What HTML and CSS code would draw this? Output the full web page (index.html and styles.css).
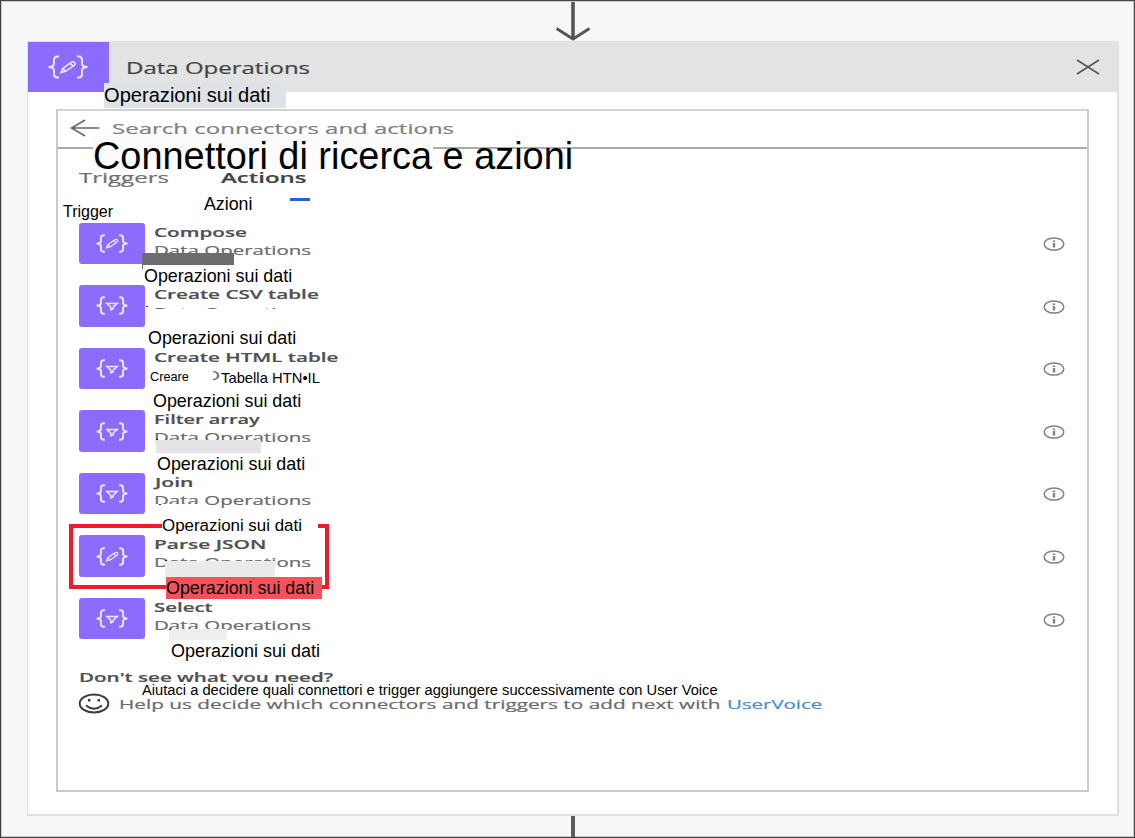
FILE: index.html
```html
<!DOCTYPE html>
<html lang="it">
<head>
<meta charset="utf-8">
<title>Data Operations</title>
<link rel="stylesheet" href="styles.css">
</head>
<body>
<svg class="defs" width="0" height="0" aria-hidden="true">
  <symbol id="braces" viewBox="0 0 42 24">
    <path d="M12 1.500H10.500Q7 1.500 7 5V8.500Q7 12 1.500 12Q7 12 7 15.500V19Q7 22.500 10.500 22.500H12M30 1.500H31.500Q35 1.500 35 5V8.500Q35 12 40.500 12Q35 12 35 15.500V19Q35 22.500 31.500 22.500H30"/>
  </symbol>
  <symbol id="compose" viewBox="0 0 42 24">
    <use href="#braces"/>
    <path d="M14 17.500L15.700 13.500L24.500 7.200Q27 6 28.200 8.200Q28.500 9.300 27.500 10.200L18.700 16.300ZM23 8.300L26.300 11.100M15.700 13.500L18.700 16.300" stroke-width="1.600"/>
  </symbol>
  <symbol id="filter" viewBox="0 0 42 24">
    <use href="#braces"/>
    <path d="M14.500 9.500H27.500L22.500 14V16L19.500 17.500V14Z" stroke-width="1.900"/>
  </symbol>
  <symbol id="info" viewBox="0 0 22 14">
    <ellipse cx="11" cy="7" rx="9.800" ry="6.100" fill="none" stroke="#808080" stroke-width="1.500"/>
    <path d="M11 3.500V5M11 6V10.500" stroke="#808080" stroke-width="2.400"/>
  </symbol>
</svg>
<div class="frame">
  <div class="connector">
    <svg width="36" height="39" viewBox="0 0 36 39"><path d="M18 0V37" stroke-width="3.600"/><path d="M1.500 26.500L18 37L34.500 26.500" stroke-width="2.800"/></svg>
  </div>
  <main class="card">
    <header class="card-head">
      <div class="head-tile"><svg class="glyph" width="42" height="24"><use href="#compose"/></svg></div>
      <h1 class="wide head-title">Data Operations</h1>
      <svg class="close" width="24" height="16" viewBox="0 0 24 16"><path d="M1 1L23 15M23 1L1 15"/></svg>
    </header>
    <section class="panel">
      <div class="search">
        <svg class="back" width="30" height="18" viewBox="0 0 30 18"><path d="M29.500 9H1.500M15 1L1.500 9L15 17"/></svg>
        <span class="wide search-text">Search connectors and actions</span>
      </div>
      <nav class="tabs">
        <span class="wide tab tab-triggers">Triggers</span>
        <span class="wide tab tab-actions">Actions</span>
      </nav>
      <ul class="list">
        <li class="row"><div class="tile"><svg class="glyph" width="34" height="19"><use href="#compose"/></svg></div><div class="labels"><b class="wide name n-compose">Compose</b><span class="wide sub">Data Operations</span></div><svg class="info" width="22" height="14"><use href="#info"/></svg></li>
        <li class="row"><div class="tile"><svg class="glyph" width="34" height="19"><use href="#filter"/></svg></div><div class="labels"><b class="wide name n-csv">Create CSV table</b><span class="wide sub">Data Operations</span></div><svg class="info" width="22" height="14"><use href="#info"/></svg></li>
        <li class="row"><div class="tile"><svg class="glyph" width="34" height="19"><use href="#filter"/></svg></div><div class="labels"><b class="wide name n-html">Create HTML table</b><span class="wide sub">Data Operations</span></div><svg class="info" width="22" height="14"><use href="#info"/></svg></li>
        <li class="row"><div class="tile"><svg class="glyph" width="34" height="19"><use href="#filter"/></svg></div><div class="labels"><b class="wide name n-filter">Filter array</b><span class="wide sub">Data Operations</span></div><svg class="info" width="22" height="14"><use href="#info"/></svg></li>
        <li class="row"><div class="tile"><svg class="glyph" width="34" height="19"><use href="#filter"/></svg></div><div class="labels"><b class="wide name n-join">Join</b><span class="wide sub">Data Operations</span></div><svg class="info" width="22" height="14"><use href="#info"/></svg></li>
        <li class="row"><div class="tile"><svg class="glyph" width="34" height="19"><use href="#compose"/></svg></div><div class="labels"><b class="wide name n-parse">Parse JSON</b><span class="wide sub">Data Operations</span></div><svg class="info" width="22" height="14"><use href="#info"/></svg></li>
        <li class="row"><div class="tile"><svg class="glyph" width="34" height="19"><use href="#filter"/></svg></div><div class="labels"><b class="wide name n-select">Select</b><span class="wide sub">Data Operations</span></div><svg class="info" width="22" height="14"><use href="#info"/></svg></li>
      </ul>
      <footer class="help">
        <b class="wide name help-title">Don't see what you need?</b>
        <div class="help-line">
          <svg class="smile" width="32" height="21" viewBox="0 0 32 21"><ellipse cx="16" cy="10.500" rx="14.300" ry="9"/><path d="M8 12.500Q16 19 24 12.500"/><path d="M10 7.200H12.400M19.600 7.200H22" stroke-width="2.400"/></svg>
          <span class="wide help-text">Help us decide which connectors and triggers to add next with</span>
          <a class="wide help-link">UserVoice</a>
        </div>
      </footer>
    </section>
  </main>
  <div class="tail"></div>

  <div class="highlight"></div>
  <i class="patch p-title"></i><i class="patch p-trigger"></i><i class="patch p-azioni"></i>
  <i class="patch p-compose"></i><i class="patch p-compose-edge"></i>
  <i class="patch p-csv"></i><i class="patch p-html-a"></i><i class="patch p-html-b"></i>
  <i class="patch p-filter"></i><i class="patch p-join"></i><i class="patch p-box"></i>
  <i class="patch p-parse"></i><i class="patch p-select"></i><i class="patch p-help"></i>
  <i class="speck s-csv"></i><i class="speck s-filter"></i><i class="speck s-join"></i><i class="speck s-parse"></i><i class="speck s-select"></i>
  <i class="tab-mark"></i>
  <span class="tr t-head">Operazioni sui dati</span>
  <span class="tr t-title">Connettori di ricerca e azioni</span>
  <span class="tr t-trigger">Trigger</span>
  <span class="tr t-azioni">Azioni</span>
  <span class="tr t-op t-1">Operazioni sui dati</span>
  <span class="tr t-op t-2">Operazioni sui dati</span>
  <span class="tr t-creare">Creare</span>
  <span class="tr t-tabella">Tabella HTN•IL</span>
  <span class="tr t-op t-3">Operazioni sui dati</span>
  <span class="tr t-op t-4">Operazioni sui dati</span>
  <span class="tr t-5">Operazioni sui dati</span>
  <span class="tr t-op t-6">Operazioni sui dati</span>
  <span class="tr t-op t-7">Operazioni sui dati</span>
  <span class="tr t-help">Aiutaci a decidere quali connettori e trigger aggiungere successivamente con User Voice</span>
</div>
</body>
</html>
```
FILE: styles.css
```css
* { box-sizing: border-box; }
body { margin: 0; font-family: "Open Sans", "Noto Sans", sans-serif; overflow: hidden; }
.defs { position: absolute; }
.frame {
  position: relative;
  width: 1135px;
  height: 838px;
  display: flex;
  flex-direction: column;
  border: 1px solid #454345;
  background: #f7f7f7;
  box-shadow: inset 0 0 0 1px #c9c9c9;
  overflow: hidden;
}
.connector { height: 40px; padding: 1px 0 0 554px; flex: none; }
.connector svg { display: block; fill: none; stroke: #555; }
.card {
  margin-left: 26px;
  width: 1092px;
  height: 775px;
  flex: none;
  border: 2px solid #e0e0e0;
  border-top-width: 1px;
  border-left-width: 1px;
  background: #fff;
}
.card-head { height: 50px; display: flex; align-items: center; background: #e3e3e3; }
.head-tile { width: 81px; height: 50px; padding-right: 2px; display: flex; align-items: center; justify-content: center; background: #8c6cff; }
.glyph { fill: none; stroke: #ece5ff; stroke-width: 2; }
.wide { display: inline-block; white-space: nowrap; transform-origin: 0 50%; transform: scaleX(var(--sx, 1.57)); -webkit-text-stroke: 0.2px currentColor; }
.head-title { margin: 1px 0 0 17px; font-size: 16px; font-weight: 400; line-height: 20px; color: #444; --sx: 1.5; }
.close { margin: 0 17px 0 auto; fill: none; stroke: #555; stroke-width: 1.6; }
.panel { margin: 17px 28px 0; height: 683px; border: 2px solid #cacaca; border-top-color: #d3d3d3; }
.search { height: 38px; display: flex; padding: 7px 0 0 12px; border-bottom: 2px solid #ababab; }
.back { margin: 1px 12px 0 0; fill: none; stroke: #666; stroke-width: 1.5; }
.search-text { font-size: 15px; line-height: 20px; color: #808080; --sx: 1.6; }
.tabs { height: 73.7px; display: flex; align-items: flex-start; padding: 18px 0 0 21px; }
.tab { width: 142px; font-size: 15px; line-height: 20px; color: #707070; }
.tab-triggers { --sx: 1.6; }
.tab-actions { font-weight: 600; color: #444; --sx: 1.6; }
.list { margin: 0; padding: 0; list-style: none; }
.row { height: 62.55px; display: flex; align-items: flex-start; padding-left: 21px; }
.tile { width: 66px; height: 41.5px; border-radius: 3px; background: #8c6cff; display: flex; align-items: center; justify-content: center; }
.tile .glyph { stroke-width: 2.5; }
.labels { display: flex; flex-direction: column; align-items: flex-start; margin: 0 auto 0 9px; }
.name { font-size: 13px; line-height: 18px; font-weight: 600; color: #505050; --sx: 1.59; }
.n-csv { --sx: 1.59; }
.n-html { --sx: 1.585; }
.n-filter { --sx: 1.53; }
.n-join { margin-left: 1px; --sx: 1.62; }
.n-parse { --sx: 1.61; }
.n-select { --sx: 1.57; }
.sub { font-size: 13px; line-height: 18px; color: #6b6b6b; --sx: 1.575; }
.info { margin: 14.6px 22px 0 0; }
.help { padding-left: 21px; margin-top: 7px; display: flex; flex-direction: column; align-items: flex-start; }
.help-title { --sx: 1.58; }
.help-line { display: flex; align-items: center; height: 24px; margin-top: 6px; }
.smile { margin: 0 9px 0 -1px; fill: none; stroke: #3c3c3c; stroke-width: 2; }
.help-text { width: 608px; font-size: 13px; line-height: 18px; color: #6b6b6b; --sx: 1.597; }
.help-link { font-size: 13px; line-height: 18px; color: #4590d0; --sx: 1.57; }
.tail { width: 4px; height: 22px; margin-left: 570px; background: #5c5c5c; flex: none; }

/* translated labels laid over the original ones */
.tr { position: absolute; white-space: nowrap; color: #000; font-family: "Liberation Sans", Arial, sans-serif; line-height: 20px; }
.t-head { left: 103px; top: 82px; width: 182px; height: 25px; line-height: 24px; font-size: 20.1px; background: #dfe3e8; }
.t-title { left: 92px; top: 133px; font-size: 37.9px; line-height: 44px; }
.t-trigger { left: 62px; top: 201px; font-size: 16px; }
.t-azioni { left: 203px; top: 193px; font-size: 17.8px; }
.t-op { font-size: 17.9px; }
.t-1 { left: 143px; top: 265px; }
.t-2 { left: 147px; top: 327px; }
.t-3 { left: 152px; top: 390px; }
.t-4 { left: 156px; top: 453px; }
.t-5 { left: 161px; top: 515px; font-size: 16.9px; }
.t-6 { left: 165px; top: 576px; width: 156px; height: 22px; line-height: 22px; background: #f2535b; }
.t-7 { left: 170px; top: 640px; font-size: 18px; }
.t-creare { left: 149px; top: 366px; font-size: 12.7px; }
.t-tabella { left: 220px; top: 367px; font-size: 14.8px; }
.t-help { left: 141px; top: 679px; font-size: 14.69px; }
.tab-mark { position: absolute; left: 289px; top: 197px; width: 20px; height: 3px; background: #2062dc; }

/* opaque patches behind the translated labels */
.patch { position: absolute; background: #fff; }
.p-title { left: 92px; top: 134px; width: 340px; height: 36px; background: #fcfcfc; }
.p-trigger { left: 62px; top: 200px; width: 52px; height: 20px; }
.p-azioni { left: 202px; top: 190px; width: 60px; height: 24px; }
.p-compose { left: 141px; top: 252px; width: 92px; height: 12px; background: #6e6c6f; }
.p-compose-edge { left: 141px; top: 264px; width: 1px; height: 4px; background: #6e6c6f; }
.p-csv { left: 147px; top: 308px; width: 168px; height: 17px; }
.p-html-a { left: 147px; top: 367px; width: 65px; height: 20px; }
.p-html-b { left: 219px; top: 367px; width: 104px; height: 20px; }
.p-filter { left: 155px; top: 439px; width: 105px; height: 13px; background: #e6e3e8; }
.p-join { left: 150px; top: 503px; width: 48px; height: 12px; }
.p-box { left: 161px; top: 514px; width: 156px; height: 20px; }
.p-parse { left: 164px; top: 560px; width: 110px; height: 16px; background: #e9ebea; }
.p-select { left: 168px; top: 628px; width: 58px; height: 11px; background: #efeeee; }
.p-help { left: 141px; top: 681px; width: 577px; height: 17px; }
.highlight { position: absolute; left: 68px; top: 523px; width: 260px; height: 65px; border: 4px solid #ec1c2a; }
.speck { position: absolute; width: 2px; height: 1px; background: #222; }
.s-csv { left: 145px; top: 305px; }
.s-filter { left: 155px; top: 438px; }
.s-join { left: 158px; top: 503px; }
.s-parse { left: 164px; top: 559px; }
.s-select { left: 168px; top: 628px; }
```
